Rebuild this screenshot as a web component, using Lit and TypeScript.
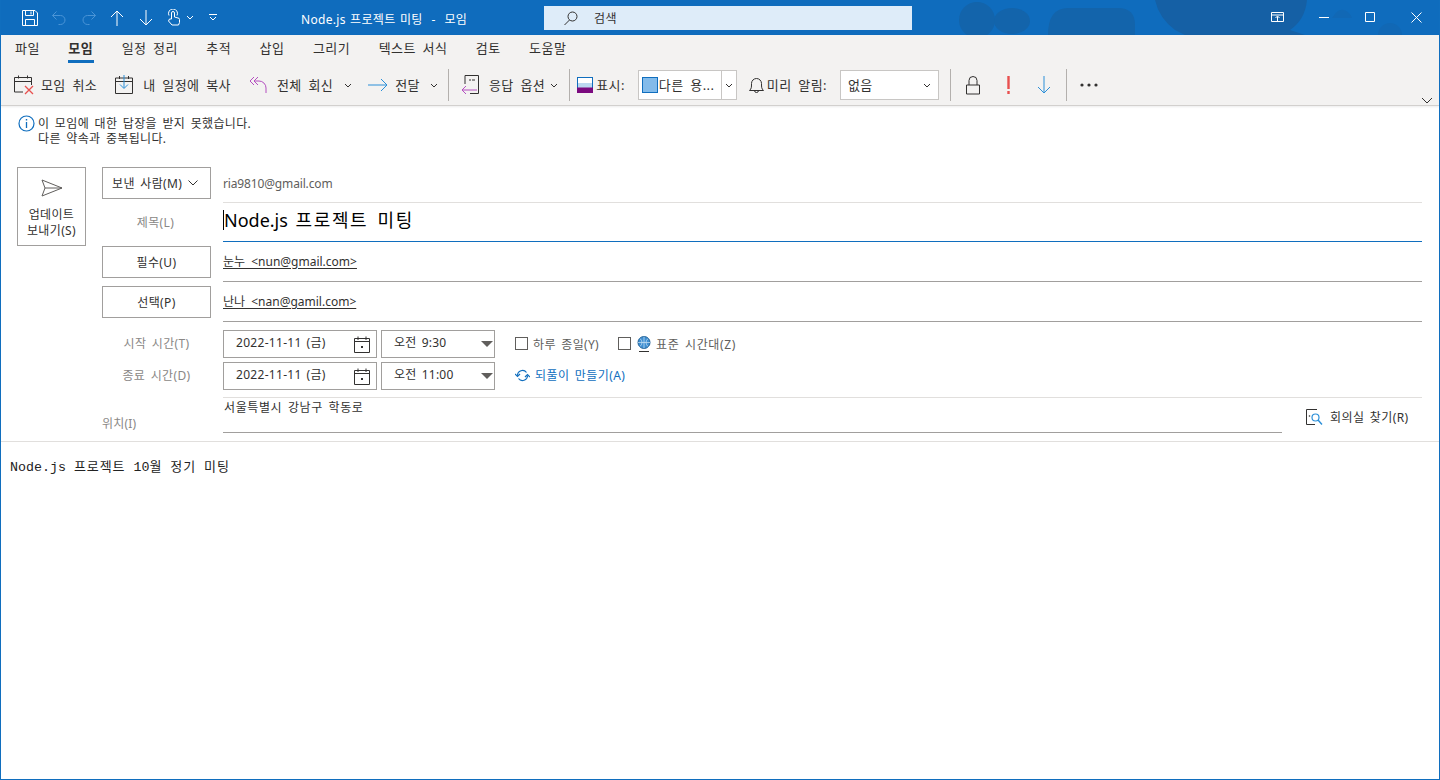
import { LitElement, html, css, svg } from "lit";
import { customElement } from "lit/decorators.js";

const chev = html`<svg class="chev" width="8" height="5" viewBox="0 0 8 5"><path d="M1 1l3 3 3-3" fill="none" stroke="#323130" stroke-width="1"/></svg>`;

@customElement("app-root")
export class AppRoot extends LitElement {
  static styles = css`
    :host { display: block; width: 1440px; height: 780px; box-sizing: border-box; overflow: hidden; background: #fff;
      font-family: "Noto Sans", "Noto Sans CJK KR", sans-serif; font-size: 12px; color: #323130; border: solid #106ebe; border-width: 0 1px 1px 1px; letter-spacing: .35px; word-spacing: 2px; }
    svg { display: block; flex: none; }
    .titlebar { margin: 0 -1px; height: 35px; background: #0f6cbd; display: flex; align-items: center; position: relative; color: #fff; overflow: hidden; }
    .blobs { position: absolute; left: 0; top: 0; }
    .qat { display: flex; align-items: center; padding-left: 22px; position: relative; width: 279px; box-sizing: border-box; }
    .qat .gap { width: 14px; }
    .qat .up { margin-left: 14px; } .qat .q2 { margin-left: 16px; } .qat .q3 { margin-left: 15px; } .qat .q4 { margin-left: 13px; } .qat .q5 { margin-left: 6px; } .qat .q6 { margin-left: 15px; }
    .title { position: relative; width: 265px; padding-left: 22px; box-sizing: border-box; font-size: 12px; white-space: pre; margin-top: 3px; letter-spacing: .3px; word-spacing: 1px; }
    .search { position: relative; width: 368px; height: 24px; background: #deecf9; display: flex; align-items: center; padding-left: 20px; box-sizing: border-box; color: #323130; margin-top: 1px; }
    .search span { margin-left: 16px; }
    .winbtns { position: relative; display: flex; align-items: center; margin-left: auto; margin-top: -1px; }
    .winbtns svg { margin-right: 36px; } .winbtns svg:first-child { margin-right: 35px; } .winbtns svg:last-child { margin-right: 18px; }
    .ribbon { background: #f3f2f1; height: 71px; box-sizing: border-box; border-bottom: 1px solid #d2d0ce; box-shadow: 0 1px 2px rgba(0,0,0,.08); position: relative; }
    .tabs { display: flex; height: 32px; padding-left: 14px; gap: 28.400px; align-items: flex-start; font-size: 13px; letter-spacing: .5px; word-spacing: 2.500px; }
    .tab { position: relative; line-height: 27px; height: 28px; white-space: pre; }
    .tab.on { font-weight: 700; color: #323130; }
    .tab.on::after { content: ""; position: absolute; left: 0; right: -1px; bottom: 0; height: 3px; background: #106ebe; }
    .tools { display: flex; align-items: center; height: 36px; font-size: 13px; white-space: pre; letter-spacing: .4px; word-spacing: 3px; }
    .tools > span, .combo > span, .combo > .txt { position: relative; top: -1px; }
    .sep { width: 1px; height: 32px; background: #b3b0ad; flex: none; }
    .chev { flex: none; }
    .g5 { width: 5px; } .g10 { width: 10px; } .g11 { width: 11px; } .g15 { width: 15px; }
    .combo { height: 30px; box-sizing: border-box; border: 1px solid #c8c6c4; background: #fff; display: flex; align-items: center; }
    .c1 { width: 99px; margin-left: 13px; padding-left: 3px; }
    .c1 .sw { width: 16px; height: 16px; box-sizing: border-box; background: #83bbea; border: 1px solid #106ebe; flex: none; }
    .c1 .txt { width: 63px; padding-left: 1px; box-sizing: border-box; }
    .c1 .div { width: 1px; height: 28px; background: #c8c6c4; margin-right: 3px; }
    .c2 { width: 99px; margin-left: 13px; padding: 0 7px; justify-content: space-between; }
    .collapse { position: absolute; right: 6px; bottom: 1px; }
    .i-a { margin: 0 6px 0 13px; } .i-b { margin: 0 10px 0 18px; } .i-c { margin: 0 9px 0 18px; } .i-d { margin: 0 7px 0 16px; }
    .i-e { margin: 0 10px 0 12px; } .i-f { margin: 0 3px 0 7px; } .i-g { margin: 0 3px 0 12px; } .i-h { margin-left: 15px; } .i-i { margin-left: 27px; } .i-j { margin-left: 13px; }
    .info { display: flex; height: 61px; padding: 9px 0 0 17px; box-sizing: border-box; line-height: 15px; font-size: 12px; }
    .info svg { margin-right: 3px; }
    .info div { padding-top: 1px; }
    .form { display: grid; grid-template-columns: 85px 1fr; padding: 0 17px 0 16px; }
    .send { width: 69px; height: 79px; box-sizing: border-box; border: 1px solid #a19f9d; display: flex; flex-direction: column; align-items: center; line-height: 16px; font-size: 12px; text-align: center; padding-top: 11px; }
    .send svg { margin-bottom: 10px; }
    .row { display: grid; grid-template-columns: 109px 1fr; column-gap: 12px; }
    .pbtn { height: 32px; box-sizing: border-box; border: 1px solid #a19f9d; display: flex; align-items: center; justify-content: center; font-size: 12px; padding-bottom: 1px; }
    .pbtn svg { margin-left: 6px; margin-top: 1px; }
    .field { box-sizing: border-box; display: flex; align-items: center; }
    .r1 { height: 36px; } .r1 .pbtn { justify-content: flex-start; padding-left: 9px; }
    .r1 .field { border-bottom: 1px solid #e1dfdd; color: #605e5c; height: 36px; padding-bottom: 3px; font-size: 12px; letter-spacing: -.15px; }
    .r2 { height: 39px; }
    .r2 .lab { text-align: center; color: #8a8886; line-height: 39px; font-size: 12px; padding-right: 2px; }
    .r2 .field { border-bottom: 1px solid #106ebe; height: 39px; font-size: 18px; color: #000; padding-bottom: 4px; letter-spacing: 0; word-spacing: 3px; }
    .caret { border-left: 1px solid #000; line-height: 20px; height: 20px; display: inline-flex; align-items: center; white-space: pre; }
    .ko { letter-spacing: 1.600px; }
    .r3 { height: 40px; }
    .r3 .pbtn { margin-top: 4px; }
    .r3 .field { height: 40px; border-bottom: 1px solid #a19f9d; padding-bottom: 2px; font-size: 12px; }
    .r3 u { text-underline-offset: 2px; text-decoration-thickness: 1px; letter-spacing: 0; word-spacing: 3px; }
    .dt { display: grid; grid-template-columns: 109px auto; column-gap: 12px; height: 28px; }
    .dt .lab { text-align: center; color: #8a8886; line-height: 28px; font-size: 12px; }
    .d1 { margin-top: 8px; } .d2 { margin-top: 4px; }
    .flds { display: flex; align-items: center; }
    .box { height: 28px; box-sizing: border-box; border: 1px solid #a19f9d; display: flex; align-items: center; justify-content: space-between; padding-bottom: 5px; white-space: pre; }
    .date { width: 154px; padding-left: 12px; padding-right: 6px; letter-spacing: .3px; word-spacing: 1.500px; }
    .date svg { margin-top: 5px; }
    .time { width: 114px; margin-left: 4px; padding-left: 12px; padding-right: 1px; letter-spacing: .2px; }
    .time svg { margin-top: 5px; margin-right: 0; }
    .ck { width: 13px; height: 13px; box-sizing: border-box; border: 1px solid #605e5c; background: #fff; flex: none; }
    .opt { display: flex; align-items: center; margin-left: 20px; color: #605e5c; font-size: 12px; padding-bottom: 1px; }
    .opt .ck + span { margin-left: 5px; }
    .opt2 { margin-left: 19px; letter-spacing: .6px; }
    .opt2 svg { margin: 0 5px 0 6px; }
    .rec { display: flex; align-items: center; margin-left: 20px; color: #106ebe; font-size: 12px; padding-bottom: 2px; letter-spacing: .4px; }
    .rec svg { margin-right: 5px; }
    .loc-row { margin-top: 7px; display: grid; grid-template-columns: 109px 1059px auto; column-gap: 12px; height: 36px; }
    .loc-row .lab { color: #8a8886; padding-top: 19px; line-height: 16px; font-size: 12px; letter-spacing: .2px; }
    .loc-row .v { border-top: 1px solid #e1dfdd; border-bottom: 1px solid #a19f9d; height: 36px; box-sizing: border-box; line-height: 16px; padding: 2px 0 0 1px; font-size: 12px; letter-spacing: .6px; }
    .find { display: flex; align-items: center; height: 36px; font-size: 12px; padding-top: 4px; box-sizing: border-box; position: relative; margin-left: 12px; letter-spacing: .4px; }
    .find svg { margin-right: 7px; }
    .find::before { content: ""; position: absolute; left: -36px; right: 0; top: 0; border-top: 1px solid #e1dfdd; }
    .hr { height: 8px; border-bottom: 1px solid #e1dfdd; }
    .body { padding: 16px 0 0 9px; font-family: "Liberation Mono", "Noto Sans CJK KR", monospace; font-size: 13.33px; line-height: 16px; color: #222; white-space: pre; letter-spacing: 0; word-spacing: 0; }
    .body span { font-family: "Noto Sans CJK KR", sans-serif; font-size: 13px; letter-spacing: .9px; }
  `;

  render() {
    const ico = {
      save: html`<svg width="16" height="16" viewBox="0 0 16 16" fill="none" stroke="#fff"><path d="M.5.5h12.500l2.500 2.500v12.500h-15zM3.500.5v5h8v-5M3.500 15.500v-6h9v6M9 1.500v3"/></svg>`,
      undo: html`<svg width="14" height="14" viewBox="0 0 14 14" fill="none" stroke="#4a94d6"><path d="M4.500.5l-4 4 4 4M.5 4.500h8a4.500 4.500 0 0 1 0 9h-2"/></svg>`,
      redo: html`<svg class="q2" width="14" height="14" viewBox="0 0 14 14" fill="none" stroke="#4a94d6"><path d="M9.500.5l4 4-4 4M13.500 4.500h-8a4.500 4.500 0 0 0 0 9h2"/></svg>`,
      up: html`<svg class="up" width="14" height="16" viewBox="0 0 14 16" fill="none" stroke="#fff"><path d="M1 7l6-6 6 6M7 1v15"/></svg>`,
      down: html`<svg class="q3" width="14" height="16" viewBox="0 0 14 16" fill="none" stroke="#fff"><path d="M1 9l6 6 6-6M7 15V0"/></svg>`,
      touch: html`<svg class="q4" width="14" height="17" viewBox="0 0 14 17" fill="none" stroke="#fff"><path d="M5.500 10V4a1.500 1.500 0 0 1 3 0v4l3.500 1a1.500 1.500 0 0 1 1.500 1.500v3l-1 2.500H6L2.500 12l1-2zM3 6.500a4.500 4.500 0 1 1 8 0"/></svg>`,
    };
    const blobs = svg`<g fill="#1364ab"><circle cx="977" cy="20" r="18"/><ellipse cx="1012" cy="21" rx="18" ry="13"/><path d="M1048 35q0-27 20-27h50q17 0 17 17v10z"/></g><path fill="#1560a5" d="M1155 0h152q-2 20-17 30l15 5h-120l-10-5q-16-12-20-30z"/><path fill="#1168b5" d="M1332 18q6-10 12-8t8 8zM1378 35a12 12 0 0 1 24 0z"/>`;
    return html`
      <div class="titlebar">
        <svg class="blobs" width="1440" height="35">${blobs}</svg>
        <div class="qat">${ico.save}<span class="gap"></span>${ico.undo}${ico.redo}${ico.up}${ico.down}${ico.touch}
          <svg class="q5" width="8" height="5" viewBox="0 0 8 5"><path d="M1 1l3 3 3-3" fill="none" stroke="#fff"/></svg>
          <svg class="q6" width="8" height="7" viewBox="0 0 8 7" fill="none" stroke="#fff"><path d="M0 .5h8M1 3l3 3 3-3"/></svg>
        </div>
        <div class="title">Node.js 프로젝트 미팅  -  모임</div>
        <div class="search"><svg width="14" height="15" viewBox="0 0 14 15" fill="none" stroke="#323130"><circle cx="8.500" cy="5.500" r="4.500"/><path d="M5.500 9L.5 14"/></svg><span>검색</span></div>
        <div class="winbtns">
          <svg width="13" height="10" viewBox="0 0 13 10" fill="none" stroke="#fff"><path d="M.5.5h12v9H.5zM.5 3h12M6.500 9V4.500M4.500 6l2-2 2 2"/></svg>
          <svg width="10" height="1" viewBox="0 0 10 1"><path d="M0 .5h10" stroke="#fff"/></svg>
          <svg width="10" height="10" viewBox="0 0 10 10"><path d="M.5.5h9v9h-9z" fill="none" stroke="#fff"/></svg>
          <svg width="11" height="11" viewBox="0 0 11 11"><path d="M.5.5l10 10M10.500.5l-10 10" stroke="#fff" fill="none"/></svg>
        </div>
      </div>

      <div class="ribbon">
        <div class="tabs">
          ${["파일", "모임", "일정 정리", "추적", "삽입", "그리기", "텍스트 서식", "검토", "도움말"].map(
            (t, i) => html`<div class="tab ${i === 1 ? "on" : ""}">${t}</div>`
          )}
        </div>
        <div class="tools">
          <svg class="i-a" width="21" height="20" viewBox="0 0 21 20" fill="none"><path d="M9 17H.5V2.500h17V10M.5 6.500h17M4.500.5v3M13.500.5v3" stroke="#323130"/><path d="M11 11l8 8M19 11l-8 8" stroke="#e8504f" stroke-width="1.300"/></svg>
          <span>모임 취소</span>
          <svg class="i-b" width="18" height="20" viewBox="0 0 18 20" fill="none"><path d="M.5 3h17v15.500H.5zM.5 6.500h17M4.500 1v3M13.500 1v3" stroke="#323130"/><path d="M9 0v13M5 9.500l4 4 4-4" stroke="#2b8fd8"/></svg>
          <span>내 일정에 복사</span>
          <svg class="i-c" width="19" height="18" viewBox="0 0 19 18" fill="none" stroke="#b44fc0"><path d="M5 1L1 5l4 4M9 1L5 5l4 4M5 5h5a7 7 0 0 1 7 7v5"/></svg>
          <span>전체 회신</span>
          <span class="g11"></span>${chev}
          <svg class="i-d" width="20" height="14" viewBox="0 0 20 14" fill="none" stroke="#2b8fd8"><path d="M0 7h19M13 1l6 6-6 6"/></svg>
          <span>전달</span>
          <span class="g10"></span>${chev}
          <span class="g10"></span><div class="sep"></div>
          <svg class="i-e" width="18" height="20" viewBox="0 0 18 20" fill="none"><path d="M4 9V.5h13.500v18H9" stroke="#323130"/><path d="M8 5h2M11 5h3" stroke="#323130"/><path d="M16 15H1M5 11l-4 4 4 4" stroke="#b44fc0"/></svg>
          <span>응답 옵션</span>
          <span class="g5"></span>${chev}
          <span class="g11"></span><div class="sep"></div>
          <svg class="i-f" width="16" height="16" viewBox="0 0 16 16"><rect x=".5" y=".5" width="15" height="15" fill="#fff" stroke="#106ebe"/><rect x="1" y="6" width="14" height="5" fill="#bcd8f0"/><rect y="10.500" width="16" height="5.500" fill="#7b0a7f"/></svg>
          <span>표시:</span>
          <div class="combo c1"><div class="sw"></div><div class="txt">다른 용...</div><div class="div"></div>${chev}</div>
          <svg class="i-g" width="15" height="18" viewBox="0 0 15 18" fill="none" stroke="#323130"><path d="M.5 14.500h14c-2-2-2-3-2-7a5 5 0 0 0-10 0c0 4 0 5-2 7zM5.500 14.500a2 2 0 0 0 4 0"/></svg>
          <span>미리 알림:</span>
          <div class="combo c2"><span>없음</span>${chev}</div>
          <span class="g11"></span><div class="sep"></div>
          <svg class="i-h" width="14" height="19" viewBox="0 0 14 19" fill="none" stroke="#323130"><path d="M.5 9h13v9H.5zM3 9V4.500a4 4 0 0 1 8 0V9"/></svg>
          <svg class="i-i" width="3" height="18" viewBox="0 0 3 18" fill="#e8504f"><rect x=".3" width="2.400" height="13"/><rect x=".3" y="15" width="2.400" height="3"/></svg>
          <svg class="i-i" width="14" height="18" viewBox="0 0 14 18" fill="none" stroke="#2b8fd8"><path d="M7 0v17M1 11l6 6 6-6"/></svg>
          <span class="g15"></span><div class="sep"></div>
          <svg class="i-j" width="18" height="4" viewBox="0 0 18 4" fill="#323130"><circle cx="2" cy="2" r="1.600"/><circle cx="9" cy="2" r="1.600"/><circle cx="16" cy="2" r="1.600"/></svg>
        </div>
        <svg class="collapse" width="12" height="7" viewBox="0 0 12 7"><path d="M1 1l5 5 5-5" fill="none" stroke="#323130"/></svg>
      </div>

      <div class="info">
        <svg width="17" height="17" viewBox="0 0 17 17" fill="none"><circle cx="8.500" cy="8.500" r="7.500" stroke="#106ebe" stroke-width="1.200"/><path d="M8.500 7v6" stroke="#106ebe" stroke-width="1.300"/><rect x="7.800" y="4" width="1.400" height="1.500" fill="#106ebe"/></svg>
        <div>이 모임에 대한 답장을 받지 못했습니다.<br />다른 약속과 중복됩니다.</div>
      </div>

      <div class="form">
        <div class="send">
          <svg width="22" height="18" viewBox="0 0 22 18" fill="none" stroke="#605e5c" stroke-width="1"><path d="M1 1l20 8-20 8 3-8zM4 9h17"/></svg>
          <div>업데이트<br />보내기(S)</div>
        </div>
        <div>
          <div class="row r1"><div class="pbtn">보낸 사람(M)<svg width="10" height="6" viewBox="0 0 10 6"><path d="M.5.5L5 5 9.500.5" fill="none" stroke="#323130"/></svg></div><div class="field">ria9810@gmail.com</div></div>
          <div class="row r2"><div class="lab">제목(L)</div><div class="field"><span class="caret">Node.js <span class="ko">프로젝트 미팅</span></span></div></div>
          <div class="row r3"><div class="pbtn">필수(U)</div><div class="field"><u>눈누 &lt;nun@gmail.com&gt;</u></div></div>
          <div class="row r3"><div class="pbtn">선택(P)</div><div class="field"><u>난나 &lt;nan@gamil.com&gt;</u></div></div>
          <div class="dt d1"><div class="lab">시작 시간(T)</div><div class="flds">
            <div class="box date"><span>2022-11-11 (금)</span>${this.cal()}</div>
            <div class="box time"><span>오전 9:30</span>${this.tri()}</div>
            <div class="opt"><div class="ck"></div><span>하루 종일(Y)</span></div>
            <div class="opt opt2"><div class="ck"></div><svg width="14" height="16" viewBox="0 0 14 16" fill="none"><circle cx="7" cy="6.500" r="6" fill="#3f8fd2" stroke="#1d5f96"/><path d="M1 6.500h12M7 .5v12M3 2.500q4 4 0 8M11 2.500q-4 4 0 8" stroke="#cfe5f7" stroke-width=".7"/><path d="M2 15.500h10" stroke="#323130"/></svg><span>표준 시간대(Z)</span></div>
          </div></div>
          <div class="dt d2"><div class="lab">종료 시간(D)</div><div class="flds">
            <div class="box date"><span>2022-11-11 (금)</span>${this.cal()}</div>
            <div class="box time"><span>오전 11:00</span>${this.tri()}</div>
            <div class="rec"><svg width="15" height="13" viewBox="0 0 15 13" fill="none" stroke="#106ebe" stroke-width="1.200"><path d="M2.500 6.500a5 5 0 0 1 9-3M12.500 6.500a5 5 0 0 1-9 3"/><path d="M0 5l2.500 2.500L5 5M10 8l2.500-2.500L15 8"/></svg><span>되풀이 만들기(A)</span></div>
          </div></div>
          <div class="loc-row"><div class="lab">위치(I)</div><div class="v">서울특별시 강남구 학동로</div>
            <div class="find"><svg width="17" height="16" viewBox="0 0 17 16" fill="none"><path d="M11 .5H.5v15H9" stroke="#323130"/><circle cx="3.500" cy="7" r=".8" fill="#323130"/><circle cx="9.500" cy="8.500" r="3.500" stroke="#2b8fd8" stroke-width="1.200"/><path d="M12 11l4 4.500" stroke="#2b8fd8" stroke-width="1.400"/></svg><span>회의실 찾기(R)</span></div>
          </div>
        </div>
      </div>
      <div class="hr"></div>
      <div class="body">Node.js <span>프로젝트</span> 10<span>월</span> <span>정기</span> <span>미팅</span></div>
    `;
  }
  cal() {
    return html`<svg width="16" height="17" viewBox="0 0 16 17" fill="none" stroke="#323130"><path d="M.5 2.500h15v14H.5zM.5 5.500h15M4 .5v3.500M12 .5v3.500"/><rect x="7" y="10" width="2" height="2" fill="#323130" stroke="none"/></svg>`;
  }
  tri() {
    return html`<svg width="12" height="6" viewBox="0 0 12 6"><path d="M0 0h12L6 6z" fill="#605e5c"/></svg>`;
  }
}
